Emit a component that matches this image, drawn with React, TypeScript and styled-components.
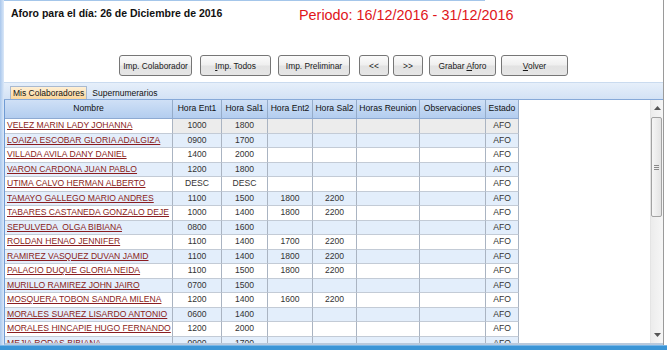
import React from 'react';
import styled, { createGlobalStyle } from 'styled-components';

const GlobalStyle = createGlobalStyle`
  html, body { margin: 0; padding: 0; background: #fff; }
  body { font-family: "Liberation Sans", Arial, sans-serif; }
  * { box-sizing: border-box; }
`;

const Window = styled.div`
  width: 667px;
  height: 350px;
  display: flex;
  flex-direction: column;
  overflow: hidden;
  background: #fff;
`;

const Body = styled.div`
  flex: 1;
  display: flex;
  min-height: 0;
`;

const LeftFrame = styled.div`
  width: 4px;
  background: linear-gradient(to right, #a9c7ec, #dbe8f8);
`;

const Main = styled.div`
  width: 660px;
  border-right: 1px solid #9a9a9a;
  display: flex;
  flex-direction: column;
  min-height: 0;
`;

const TopEdge = styled.div`
  width: 481px;
  height: 1px;
  background: #a4c6ea;
`;

const Header = styled.div`
  height: 54px;
  display: flex;
  align-items: flex-start;
  padding: 5px 0 0 7px;
`;

const DayTitle = styled.div`
  width: 288px;
  font-weight: bold;
  font-size: 10.5px;
  line-height: 14px;
  color: #111;
`;

const Period = styled.div`
  font-size: 14.4px;
  line-height: 18px;
  color: #e0141a;
`;

const Toolbar = styled.div`
  height: 21px;
  display: flex;
  padding-left: 115px;
`;

const Btn = styled.button<{ $w: number; $ml: number }>`
  width: ${p => p.$w}px;
  margin-left: ${p => p.$ml}px;
  height: 21px;
  padding: 0;
  border: 1px solid #767676;
  border-radius: 3px;
  background: linear-gradient(#fbfbfb, #efefef 48%, #e2e2e2 52%, #e6e6e6);
  font-family: "Liberation Sans", Arial, sans-serif;
  font-size: 8.4px;
  color: #1a1a1a;
  text-align: center;
  white-space: pre;
  u { text-decoration: underline; }
`;

const Spacer = styled.div`
  height: 6px;
`;

const TabStrip = styled.div`
  height: 18px;
  display: flex;
  align-items: flex-end;
  padding-left: 6px;
  gap: 2px;
  background: linear-gradient(#e6effa, #d3e2f5);
  border-top: 1px solid #cadbef;
  border-bottom: 1px solid #86a9d8;
`;

const Tab = styled.div<{ $active?: boolean }>`
  height: 13px;
  padding: 0 2px;
  font-size: 8.5px;
  line-height: 12px;
  color: #111;
  border: 1px solid ${p => (p.$active ? '#a9b9cf' : 'transparent')};
  border-bottom: none;
  background: ${p => (p.$active ? 'linear-gradient(#fff0d6, #fbd69c)' : 'transparent')};
`;

const GridFrame = styled.div`
  flex: 1;
  display: flex;
  min-height: 0;
  border-left: 1px solid #6f9bd4;
  border-bottom: 2px solid #b9c9dc;
`;

const TableWrap = styled.div`
  width: 514px;
  overflow: hidden;
  display: flex;
  flex-direction: column;
`;

const COLS = '168px 49px 46px 45px 44px 63px 66px 33px';

const HeadRow = styled.div`
  display: grid;
  grid-template-columns: ${COLS};
  height: 19px;
  flex-shrink: 0;
  background: linear-gradient(#cfe0f6, #b3cdef);
  border-bottom: 1px solid #8eaad2;
`;

const HeadCell = styled.div`
  font-size: 8.6px;
  line-height: 17px;
  text-align: center;
  color: #111;
  border-right: 1px solid #95acc9;
  white-space: nowrap;
  overflow: hidden;
`;

const Row = styled.div<{ $bg: string }>`
  display: grid;
  grid-template-columns: ${COLS};
  height: 14.5px;
  flex-shrink: 0;
  background: ${p => p.$bg};
`;

const Cell = styled.div<{ $bg?: string }>`
  font-size: 8.6px;
  line-height: 13.5px;
  text-align: center;
  color: #333;
  border-right: 1px solid #aab4c2;
  border-bottom: 1px solid #c3cbd6;
  background: ${p => p.$bg || 'transparent'};
  white-space: nowrap;
  overflow: hidden;
`;

const NameCell = styled(Cell)`
  text-align: left;
  padding-left: 2px;
  color: #8a1c20;
  white-space: pre;
  span { text-decoration: underline; }
`;

const Empty = styled.div`
  flex: 1;
  background: #fff;
`;

const ScrollBar = styled.div`
  width: 13px;
  display: flex;
  flex-direction: column;
  background: linear-gradient(to right, #ececec, #f6f6f6);
  border-left: 1px solid #e4e4e4;
`;

const ArrowBtn = styled.div`
  height: 16px;
  display: flex;
  align-items: center;
  justify-content: center;
`;

const Thumb = styled.div`
  height: 100px;
  margin: 1px 1px 0 0;
  border: 1px solid #a2a2a2;
  border-radius: 2px;
  background: linear-gradient(to right, #f6f6f6, #e3e3e3);
  display: flex;
  align-items: center;
  justify-content: center;
`;

const Track = styled.div`
  flex: 1;
`;

const BottomBar = styled.div`
  height: 5px;
  background: #3b95d6;
  border-top: 1px solid #79b7e8;
`;

type R = [string, string, string, string, string];
const rows: R[] = [
  ['VELEZ MARIN LADY JOHANNA', '1000', '1800', '', ''],
  ['LOAIZA ESCOBAR GLORIA ADALGIZA', '0900', '1700', '', ''],
  ['VILLADA AVILA DANY DANIEL', '1400', '2000', '', ''],
  ['VARON CARDONA JUAN PABLO', '1200', '1800', '', ''],
  ['UTIMA CALVO HERMAN ALBERTO', 'DESC', 'DESC', '', ''],
  ['TAMAYO GALLEGO MARIO ANDRES', '1100', '1500', '1800', '2200'],
  ['TABARES CASTANEDA GONZALO DEJE', '1000', '1400', '1800', '2200'],
  ['SEPULVEDA  OLGA BIBIANA', '0800', '1600', '', ''],
  ['ROLDAN HENAO JENNIFER', '1100', '1400', '1700', '2200'],
  ['RAMIREZ VASQUEZ DUVAN JAMID', '1100', '1400', '1800', '2200'],
  ['PALACIO DUQUE GLORIA NEIDA', '1100', '1500', '1800', '2200'],
  ['MURILLO RAMIREZ JOHN JAIRO', '0700', '1500', '', ''],
  ['MOSQUERA TOBON SANDRA MILENA', '1200', '1400', '1600', '2200'],
  ['MORALES SUAREZ LISARDO ANTONIO', '0600', '1400', '', ''],
  ['MORALES HINCAPIE HUGO FERNANDO', '1200', '2000', '', ''],
  ['MEJIA RODAS BIBIANA', '0900', '1700', '', ''],
];

const headers = ['Nombre', 'Hora Ent1', 'Hora Sal1', 'Hora Ent2', 'Hora Sal2', 'Horas Reunion', 'Observaciones', 'Estado'];

const buttons: { label: React.ReactNode; w: number; ml: number }[] = [
  { label: 'Imp. Colaborador', w: 73, ml: 0 },
  { label: <span><u>I</u>mp. Todos</span>, w: 71, ml: 8 },
  { label: 'Imp. Preliminar', w: 72, ml: 7 },
  { label: '<<', w: 30, ml: 9 },
  { label: '>>', w: 30, ml: 4 },
  { label: <span>Grabar{' '}<u>A</u>foro</span>, w: 67, ml: 6 },
  { label: <span><u>V</u>olver</span>, w: 67, ml: 5 },
];

export default function App() {
  return (
    <>
      <GlobalStyle />
      <Window>
        <Body>
          <LeftFrame />
          <Main>
            <TopEdge />
            <Header>
              <DayTitle>Aforo para el día: 26 de Diciembre de 2016</DayTitle>
              <Period>Periodo: 16/12/2016 - 31/12/2016</Period>
            </Header>
            <Toolbar>
              {buttons.map((b, i) => (
                <Btn key={i} $w={b.w} $ml={b.ml}>{b.label}</Btn>
              ))}
            </Toolbar>
            <Spacer />
            <TabStrip>
              <Tab $active>Mis Colaboradores</Tab>
              <Tab>Supernumerarios</Tab>
            </TabStrip>
            <GridFrame>
              <TableWrap>
                <HeadRow>
                  {headers.map(h => (
                    <HeadCell key={h}>{h}</HeadCell>
                  ))}
                </HeadRow>
                {rows.map((r, i) => {
                  const bg = i % 2 === 1 ? '#e3eefb' : '#ffffff';
                  const cellBg = i === 0 ? '#ececec' : undefined;
                  return (
                    <Row key={i} $bg={bg}>
                      <NameCell><span>{r[0]}</span></NameCell>
                      <Cell $bg={cellBg}>{r[1]}</Cell>
                      <Cell $bg={cellBg}>{r[2]}</Cell>
                      <Cell $bg={cellBg}>{r[3]}</Cell>
                      <Cell $bg={cellBg}>{r[4]}</Cell>
                      <Cell $bg={cellBg}></Cell>
                      <Cell $bg={cellBg}></Cell>
                      <Cell $bg={cellBg}>AFO</Cell>
                    </Row>
                  );
                })}
              </TableWrap>
              <Empty />
              <ScrollBar>
                <ArrowBtn>
                  <svg width="7" height="4" viewBox="0 0 7 4"><path d="M0 4 L3.5 0 L7 4 Z" fill="#555" /></svg>
                </ArrowBtn>
                <Thumb>
                  <svg width="5" height="5" viewBox="0 0 5 5">
                    <path d="M0 0.5H5M0 2.5H5M0 4.5H5" stroke="#8a8a8a" strokeWidth="1" />
                  </svg>
                </Thumb>
                <Track />
                <ArrowBtn>
                  <svg width="7" height="4" viewBox="0 0 7 4"><path d="M0 0 L3.5 4 L7 0 Z" fill="#555" /></svg>
                </ArrowBtn>
              </ScrollBar>
            </GridFrame>
          </Main>
        </Body>
        <BottomBar />
      </Window>
    </>
  );
}
